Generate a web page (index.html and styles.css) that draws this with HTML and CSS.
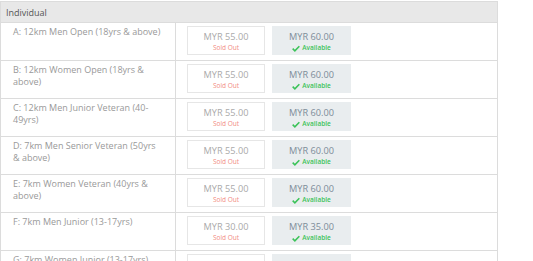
FILE: index.html
```html
<!DOCTYPE html>
<html>
<head>
<meta charset="utf-8">
<link rel="stylesheet" href="styles.css">
</head>
<body>
<table class="tickets">
  <colgroup><col class="c1"><col class="c2"></colgroup>
  <thead>
    <tr class="hrow"><th colspan="2" class="group">Individual</th></tr>
  </thead>
  <tbody>
    <tr>
      <td class="cat">A: 12km Men Open (18yrs &amp; above)</td>
      <td class="prices">
        <div class="price-row">
          <div class="box sold"><div class="amt">MYR 55.00</div><div class="status">Sold Out</div></div>
          <div class="box avail"><div class="amt">MYR 60.00</div><div class="status"><svg class="chk" viewBox="0 0 12 10" width="8" height="7"><path d="M1 5.2 L4.3 8.4 L11 1.6" fill="none" stroke="#3cc35a" stroke-width="2.4"/></svg>Available</div></div>
        </div>
      </td>
    </tr>
    <tr>
      <td class="cat">B: 12km Women Open (18yrs &amp; above)</td>
      <td class="prices">
        <div class="price-row">
          <div class="box sold"><div class="amt">MYR 55.00</div><div class="status">Sold Out</div></div>
          <div class="box avail"><div class="amt">MYR 60.00</div><div class="status"><svg class="chk" viewBox="0 0 12 10" width="8" height="7"><path d="M1 5.2 L4.3 8.4 L11 1.6" fill="none" stroke="#3cc35a" stroke-width="2.4"/></svg>Available</div></div>
        </div>
      </td>
    </tr>
    <tr>
      <td class="cat">C: 12km Men Junior Veteran (40-49yrs)</td>
      <td class="prices">
        <div class="price-row">
          <div class="box sold"><div class="amt">MYR 55.00</div><div class="status">Sold Out</div></div>
          <div class="box avail"><div class="amt">MYR 60.00</div><div class="status"><svg class="chk" viewBox="0 0 12 10" width="8" height="7"><path d="M1 5.2 L4.3 8.4 L11 1.6" fill="none" stroke="#3cc35a" stroke-width="2.4"/></svg>Available</div></div>
        </div>
      </td>
    </tr>
    <tr>
      <td class="cat">D: 7km Men Senior Veteran (50yrs &amp; above)</td>
      <td class="prices">
        <div class="price-row">
          <div class="box sold"><div class="amt">MYR 55.00</div><div class="status">Sold Out</div></div>
          <div class="box avail"><div class="amt">MYR 60.00</div><div class="status"><svg class="chk" viewBox="0 0 12 10" width="8" height="7"><path d="M1 5.2 L4.3 8.4 L11 1.6" fill="none" stroke="#3cc35a" stroke-width="2.4"/></svg>Available</div></div>
        </div>
      </td>
    </tr>
    <tr>
      <td class="cat">E: 7km Women Veteran (40yrs &amp; above)</td>
      <td class="prices">
        <div class="price-row">
          <div class="box sold"><div class="amt">MYR 55.00</div><div class="status">Sold Out</div></div>
          <div class="box avail"><div class="amt">MYR 60.00</div><div class="status"><svg class="chk" viewBox="0 0 12 10" width="8" height="7"><path d="M1 5.2 L4.3 8.4 L11 1.6" fill="none" stroke="#3cc35a" stroke-width="2.4"/></svg>Available</div></div>
        </div>
      </td>
    </tr>
    <tr>
      <td class="cat">F: 7km Men Junior (13-17yrs)</td>
      <td class="prices">
        <div class="price-row">
          <div class="box sold"><div class="amt">MYR 30.00</div><div class="status">Sold Out</div></div>
          <div class="box avail"><div class="amt">MYR 35.00</div><div class="status"><svg class="chk" viewBox="0 0 12 10" width="8" height="7"><path d="M1 5.2 L4.3 8.4 L11 1.6" fill="none" stroke="#3cc35a" stroke-width="2.4"/></svg>Available</div></div>
        </div>
      </td>
    </tr>
    <tr>
      <td class="cat">G: 7km Women Junior (13-17yrs)</td>
      <td class="prices">
        <div class="price-row">
          <div class="box sold"><div class="amt">MYR 30.00</div><div class="status">Sold Out</div></div>
          <div class="box avail"><div class="amt">MYR 35.00</div><div class="status"><svg class="chk" viewBox="0 0 12 10" width="8" height="7"><path d="M1 5.2 L4.3 8.4 L11 1.6" fill="none" stroke="#3cc35a" stroke-width="2.4"/></svg>Available</div></div>
        </div>
      </td>
    </tr>
  </tbody>
</table>
</body>
</html>
```
FILE: styles.css
```css
html, body {
  margin: 0;
  padding: 0;
  background: #fff;
  overflow: hidden;
}
body {
  font-family: "Open Sans", "Liberation Sans", sans-serif;
}
.tickets {
  border-collapse: collapse;
  width: 498px;
  table-layout: fixed;
  margin-top: 1px;
}
.c1 { width: 175px; }
.tickets th, .tickets td {
  border: 1px solid #dcdcdc;
  padding: 0;
}
.hrow { height: 21px; }
tbody tr { height: 38px; }
.group {
  background: #e8e8e8;
  color: #555;
  font-weight: normal;
  text-align: left;
  font-size: 9px;
  padding: 0 0 0 5px !important;
}
.cat {
  vertical-align: top;
  color: #999;
  font-size: 9px;
  line-height: 12px;
  padding: 3px 14px 0 12px !important;
}
.prices {
  vertical-align: top;
  padding: 3px 0 0 11px !important;
}
.price-row {
  display: flex;
  gap: 7px;
}
.box {
  width: 78px;
  height: 29px;
  box-sizing: border-box;
  text-align: center;
  padding-top: 4px;
}
.sold {
  border: 1px solid #e6e6e6;
}
.avail {
  width: 79px;
  background: #e9edef;
  border: 1px solid #e9edef;
}
.amt {
  font-size: 9.2px;
  line-height: 12px;
  color: #aaa;
}
.avail .amt {
  color: #7d8c99;
}
.status {
  font-size: 6.5px;
  line-height: 10px;
  margin-top: 0;
}
.sold .status {
  color: #f28b82;
}
.avail .status {
  color: #3cc35a;
  font-weight: 600;
  display: flex;
  align-items: center;
  justify-content: center;
  gap: 2px;
}
.chk {
  display: block;
}
```
